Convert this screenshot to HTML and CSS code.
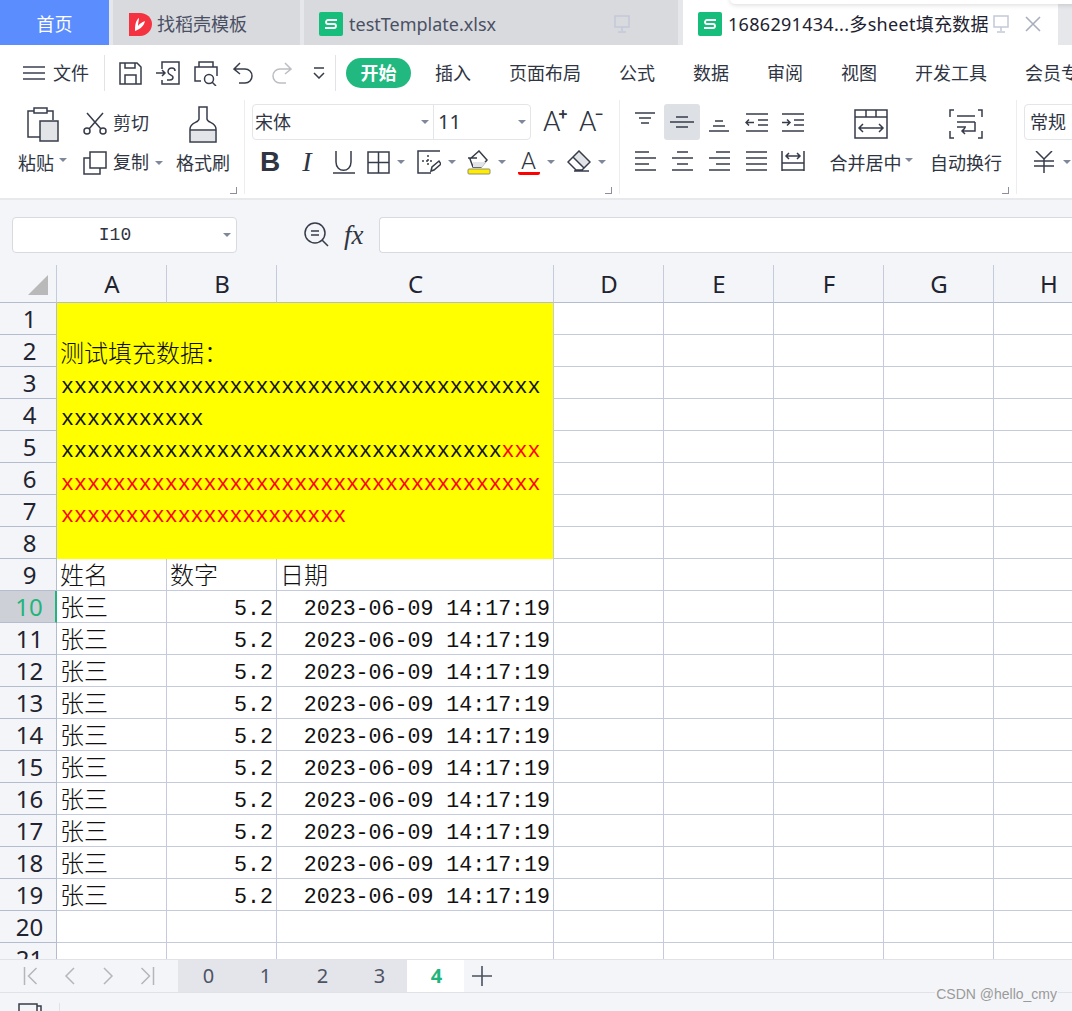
FILE: index.html
```html
<!DOCTYPE html>
<html>
<head>
    <title>WPS 表格</title>
    <link rel="stylesheet" href="styles.css">
</head>
<body>
    <div class="tabbar">
        <div class="tab home">首页</div>
        <div class="tab docer">
            <svg class="logo" width="23" height="24" viewBox="0 0 23 24"><path fill="#f5323f" d="M0 1h11c7 0 12 5 12 11s-5 12-12 12H0z"/><path fill="#fff" d="M6 19c3-1 9-4 10-10-3 1-6 3-7 5 0-3 1-6 1-8-3 2-4 6-4 13z"/></svg>
            <span>找稻壳模板</span>
        </div>
        <div class="tab doc">
            <svg class="logo" width="24" height="24" viewBox="0 0 24 24"><rect width="24" height="24" rx="2" fill="#16bd7b"/><path fill="none" stroke="#fff" stroke-width="1.8" d="M18 8H9a2 2 0 0 0 0 4h6a2 2 0 0 1 0 4H6"/></svg>
            <span class="doc-name">testTemplate.xlsx</span>
            <svg class="monitor" width="16" height="18" viewBox="0 0 16 18"><path fill="none" stroke="#c4c9d8" stroke-width="1.5" d="M1 1h14v11H1zM8 12v4M4 17h8"/></svg>
        </div>
        <div class="tab active">
            <svg class="logo" width="24" height="24" viewBox="0 0 24 24"><rect width="24" height="24" rx="2" fill="#16bd7b"/><path fill="none" stroke="#fff" stroke-width="1.8" d="M18 8H9a2 2 0 0 0 0 4h6a2 2 0 0 1 0 4H6"/></svg>
            <span class="doc-name">1686291434...多sheet填充数据</span>
            <svg class="monitor" width="16" height="18" viewBox="0 0 16 18"><path fill="none" stroke="#c4c9d8" stroke-width="1.5" d="M1 1h14v11H1zM8 12v4M4 17h8"/></svg>
            <svg class="close" width="16" height="16" viewBox="0 0 16 16"><path fill="none" stroke="#a9aebd" stroke-width="1.6" d="M1 1l14 14M15 1L1 15"/></svg>
        </div>
        <div class="tab-shadow"></div>
    </div>

    <div class="menubar">
        <div class="file-btn">
            <svg width="22" height="14" viewBox="0 0 22 14"><path fill="none" stroke="#3a4050" stroke-width="1.6" d="M0 1h22M0 7h22M0 13h22"/></svg>
            <span>文件</span>
        </div>
        <div class="quick">
            <svg width="23" height="23" viewBox="0 0 23 23"><path class="ln" d="M1 1h17l4 4v17H1zM6 22v-9h11v9M6 1v5h10V1"/></svg>
            <svg width="24" height="24" viewBox="0 0 24 24"><path class="ln" d="M6 8V1h17v22H6v-4M0 12h9M6 9l3 3-3 3M11 19h3c2 0 3-1 3-3s-5-2-5-5 2-4 4-4 3 1 3 3"/></svg>
            <svg width="24" height="25" viewBox="0 0 24 25"><path class="ln" d="M5 6V1h14v5M7 20H1V6h22v9"/><circle class="ln" cx="15" cy="18" r="4.5"/><path class="ln" d="M18 21l4 4"/></svg>
            <svg width="20" height="22" viewBox="0 0 20 22"><path class="ln" d="M7 1L1 7l6 5M1 7h11c4 0 7 3 7 7s-3 7-7 7H6"/></svg>
            <svg width="20" height="22" viewBox="0 0 20 22"><path class="ln faint" d="M13 1l6 6-6 5M19 7H8c-4 0-7 3-7 7s3 7 7 7h6"/></svg>
            <svg width="12" height="12" viewBox="0 0 12 12"><path class="ln" d="M1 1h10M1 6l5 5 5-5"/></svg>
        </div>
        <div class="menu-tabs">
            <span class="pill">开始</span>
            <span>插入</span>
            <span>页面布局</span>
            <span>公式</span>
            <span>数据</span>
            <span>审阅</span>
            <span>视图</span>
            <span>开发工具</span>
            <span>会员专享</span>
        </div>
    </div>

    <div class="ribbon">
        <div class="group clip">
            <div class="big paste">
                <div class="big-icon">
                    <svg width="32" height="35" viewBox="0 0 32 35"><path class="ln" d="M7 4H1v26h12M20 4h6v9M7 1h13v5H7z"/><rect class="ln" x="13" y="14" width="18" height="20" fill="#e2e4e7"/></svg>
                </div>
                <div class="big-label">粘贴<i class="caret"></i></div>
            </div>
            <div class="small">
                <div class="small-row">
                    <svg width="24" height="23" viewBox="0 0 24 23"><circle class="ln" cx="4" cy="19" r="3"/><circle class="ln" cx="20" cy="19" r="3"/><path class="ln" d="M6 17L20 1M18 17L4 1"/></svg>
                    <span>剪切</span>
                </div>
                <div class="small-row">
                    <svg width="24" height="24" viewBox="0 0 24 24"><path class="ln" d="M7 1h16v16H7zM7 7H1v16h16v-6"/></svg>
                    <span>复制</span><i class="caret"></i>
                </div>
            </div>
            <div class="big brush">
                <div class="big-icon">
                    <svg width="28" height="37" viewBox="0 0 28 37"><path class="ln" d="M10 1h8v12c0 4 9 3 9 10v13H1V23c0-7 9-6 9-10z"/><path d="M2 25h24v10H2z" fill="#e2e4e7"/><path class="ln" d="M1 24h26"/></svg>
                </div>
                <div class="big-label">格式刷</div>
            </div>
            <i class="corner"></i>
        </div>

        <div class="group font">
            <div class="font-top">
                <div class="select font-select">
                    <div class="select-part name">宋体<i class="caret"></i></div>
                    <div class="select-part size">11<i class="caret"></i></div>
                </div>
                <span class="grow">A<sup>+</sup></span>
                <span class="grow">A<sup>−</sup></span>
            </div>
            <div class="font-tools">
                <div class="slot s36"><b class="bold">B</b></div>
                <div class="slot s38"><span class="ital">I</span></div>
                <div class="slot s35">
                    <svg width="22" height="23" viewBox="0 0 22 23"><path class="ln" d="M3 0v11c0 11 15 11 15 0V0M0 22h22"/></svg>
                </div>
                <div class="slot s50">
                    <svg width="23" height="23" viewBox="0 0 23 23"><path class="ln" d="M1 1h21v21H1zM11.500 1v21M1 11.500h21"/></svg><i class="caret"></i>
                </div>
                <div class="slot s50">
                    <svg width="24" height="24" viewBox="0 0 24 24"><path class="ln" d="M23 1H1v22h13"/><path class="ln" stroke-dasharray="2 2" d="M11 5v12M5 11h12"/><path class="ln" d="M14 21l1-4 7-6 2 3-7 6z"/></svg><i class="caret"></i>
                </div>
                <div class="slot s50">
                    <svg width="24" height="25" viewBox="0 0 24 25"><path class="ln" d="M3 9l9-8 8 9-6 7H6zM1 8h9"/><path d="M6 12h13l-4 5H6z" fill="#e2e4e7"/><rect x="1" y="19" width="22" height="5" rx="1" fill="#ffec00" stroke="#8c8f70"/></svg><i class="caret"></i>
                </div>
                <div class="slot s50 color">
                    <span class="color-a">A</span><i class="caret"></i>
                </div>
                <div class="slot s50">
                    <svg width="24" height="24" viewBox="0 0 24 24"><path d="M12 2l10 10-5 5L7 7z" fill="#e2e4e7"/><path class="ln" d="M1 12L12 1l11 11-8 8H9zM7 21h15M6 7l11 11"/></svg><i class="caret"></i>
                </div>
            </div>
            <i class="corner"></i>
        </div>

        <div class="group align">
            <div class="align-grid">
                <div class="cell"><svg class="high" width="20" height="12" viewBox="0 0 20 12"><path class="ln" d="M0 1h20M4 6h12M6 11h8"/></svg></div>
                <div class="cell on"><svg width="24" height="14" viewBox="0 0 24 14"><path class="ln" d="M6 2h12M0 7h24M6 12h12"/></svg></div>
                <div class="cell"><svg class="low" width="20" height="12" viewBox="0 0 20 12"><path class="ln" d="M6 1h8M4 6h12M0 11h20"/></svg></div>
                <div class="cell"><svg width="23" height="19" viewBox="0 0 23 19"><path class="ln" d="M1 1h22M13 7h10M13 12h10M1 18h22M1 9.500h8M4 6.500L1 9.500l3 3"/></svg></div>
                <div class="cell"><svg width="23" height="19" viewBox="0 0 23 19"><path class="ln" d="M0 1h22M12 7h10M12 12h10M0 18h22M0 9.500h8M5 6.500l3 3-3 3"/></svg></div>
                <div class="cell"><svg width="21" height="20" viewBox="0 0 21 20"><path class="ln" d="M0 1h14M0 7h21M0 13h14M0 19h21"/></svg></div>
                <div class="cell"><svg width="21" height="20" viewBox="0 0 21 20"><path class="ln" d="M5 1h11M0 7h21M5 13h11M0 19h21"/></svg></div>
                <div class="cell"><svg width="21" height="20" viewBox="0 0 21 20"><path class="ln" d="M7 1h14M0 7h21M7 13h14M0 19h21"/></svg></div>
                <div class="cell"><svg width="21" height="20" viewBox="0 0 21 20"><path class="ln" d="M0 1h21M0 7h21M0 13h21M0 19h21"/></svg></div>
                <div class="cell"><svg width="24" height="21" viewBox="0 0 24 21"><path class="ln" d="M1 0v20M23 0v20M1 12h22M1 19h22M5 5h14M8 2L5 5l3 3M16 2l3 3-3 3"/></svg></div>
            </div>
            <div class="big merge">
                <div class="big-icon">
                    <svg width="34" height="30" viewBox="0 0 34 30"><path class="ln" d="M1 1h32v28H1zM1 8h32M12 1v7M22 1v7M5 19h24M9 15l-4 4 4 4M25 15l4 4-4 4"/></svg>
                </div>
                <div class="big-label">合并居中<i class="caret"></i></div>
            </div>
            <div class="big wrap">
                <div class="big-icon">
                    <svg width="34" height="30" viewBox="0 0 34 30"><path class="ln" d="M5 1H1v7M29 1h4v7M1 22v7h4M33 22v7h-4M8 7h18M8 13h18M8 18h9M26 13v9H13M16 19l-3 3 3 3"/></svg>
                </div>
                <div class="big-label">自动换行</div>
            </div>
            <i class="corner"></i>
        </div>

        <div class="group number">
            <div class="select num-select">常规</div>
            <div class="slot money">
                <svg width="20" height="22" viewBox="0 0 20 22"><path class="ln" d="M2 0l8 8 8-8M0 10h20M0 15h20M10 8v14"/></svg><i class="caret"></i>
            </div>
        </div>
    </div>

    <div class="formula">
        <div class="namebox"><span>I10</span><i class="caret"></i></div>
        <svg class="lens" width="25" height="25" viewBox="0 0 25 25"><circle class="ln" cx="11" cy="11" r="10"/><path class="ln" d="M18 18l6 6M7 9h8M7 13h8"/></svg>
        <span class="fx">fx</span>
        <div class="formula-input"></div>
    </div>

    <div class="sheet">
        <table class="grid">
            <colgroup>
                <col class="c-row"><col class="c-std"><col class="c-std"><col class="c-wide"><col class="c-std"><col class="c-std"><col class="c-std"><col class="c-std"><col class="c-std">
            </colgroup>
            <tr class="col-head">
                <th class="all"><svg width="20" height="20" viewBox="0 0 20 20"><path fill="#b9b9b9" d="M20 0v20H0z"/></svg></th>
                <th>A</th><th>B</th><th>C</th><th>D</th><th>E</th><th>F</th><th>G</th><th>H</th>
            </tr>
            <tr>
                <th>1</th>
                <td class="title" colspan="3" rowspan="8">
                    <div class="line cjk">测试填充数据：</div>
                    <div class="line">xxxxxxxxxxxxxxxxxxxxxxxxxxxxxxxxxxxxx</div>
                    <div class="line">xxxxxxxxxxx</div>
                    <div class="line">xxxxxxxxxxxxxxxxxxxxxxxxxxxxxxxxxx<span class="red">xxx</span></div>
                    <div class="line red">xxxxxxxxxxxxxxxxxxxxxxxxxxxxxxxxxxxxx</div>
                    <div class="line red">xxxxxxxxxxxxxxxxxxxxxx</div>
                </td>
                <td></td><td></td><td></td><td></td><td></td>
            </tr>
            <tr><th>2</th><td></td><td></td><td></td><td></td><td></td></tr>
            <tr><th>3</th><td></td><td></td><td></td><td></td><td></td></tr>
            <tr><th>4</th><td></td><td></td><td></td><td></td><td></td></tr>
            <tr><th>5</th><td></td><td></td><td></td><td></td><td></td></tr>
            <tr><th>6</th><td></td><td></td><td></td><td></td><td></td></tr>
            <tr><th>7</th><td></td><td></td><td></td><td></td><td></td></tr>
            <tr><th>8</th><td></td><td></td><td></td><td></td><td></td></tr>
            <tr><th>9</th><td class="cjk">姓名</td><td class="cjk">数字</td><td class="cjk">日期</td><td></td><td></td><td></td><td></td><td></td></tr>
            <tr><th class="current">10</th><td class="cjk">张三</td><td class="num">5.2</td><td class="num">2023-06-09 14:17:19</td><td></td><td></td><td></td><td></td><td></td></tr>
            <tr><th>11</th><td class="cjk">张三</td><td class="num">5.2</td><td class="num">2023-06-09 14:17:19</td><td></td><td></td><td></td><td></td><td></td></tr>
            <tr><th>12</th><td class="cjk">张三</td><td class="num">5.2</td><td class="num">2023-06-09 14:17:19</td><td></td><td></td><td></td><td></td><td></td></tr>
            <tr><th>13</th><td class="cjk">张三</td><td class="num">5.2</td><td class="num">2023-06-09 14:17:19</td><td></td><td></td><td></td><td></td><td></td></tr>
            <tr><th>14</th><td class="cjk">张三</td><td class="num">5.2</td><td class="num">2023-06-09 14:17:19</td><td></td><td></td><td></td><td></td><td></td></tr>
            <tr><th>15</th><td class="cjk">张三</td><td class="num">5.2</td><td class="num">2023-06-09 14:17:19</td><td></td><td></td><td></td><td></td><td></td></tr>
            <tr><th>16</th><td class="cjk">张三</td><td class="num">5.2</td><td class="num">2023-06-09 14:17:19</td><td></td><td></td><td></td><td></td><td></td></tr>
            <tr><th>17</th><td class="cjk">张三</td><td class="num">5.2</td><td class="num">2023-06-09 14:17:19</td><td></td><td></td><td></td><td></td><td></td></tr>
            <tr><th>18</th><td class="cjk">张三</td><td class="num">5.2</td><td class="num">2023-06-09 14:17:19</td><td></td><td></td><td></td><td></td><td></td></tr>
            <tr><th>19</th><td class="cjk">张三</td><td class="num">5.2</td><td class="num">2023-06-09 14:17:19</td><td></td><td></td><td></td><td></td><td></td></tr>
            <tr><th>20</th><td></td><td></td><td></td><td></td><td></td><td></td><td></td><td></td></tr>
            <tr><th>21</th><td></td><td></td><td></td><td></td><td></td><td></td><td></td><td></td></tr>
        </table>
    </div>

    <div class="sheet-tabs">
        <div class="nav">
            <svg width="14" height="18" viewBox="0 0 14 18"><path class="nav-ln" d="M1 0v18M13 1L5 9l8 8"/></svg>
            <svg width="11" height="18" viewBox="0 0 11 18"><path class="nav-ln" d="M10 1L2 9l8 8"/></svg>
            <svg width="11" height="18" viewBox="0 0 11 18"><path class="nav-ln" d="M1 1l8 8-8 8"/></svg>
            <svg width="14" height="18" viewBox="0 0 14 18"><path class="nav-ln" d="M13 0v18M1 1l8 8-8 8"/></svg>
        </div>
        <div class="sheets">
            <span>0</span><span>1</span><span>2</span><span>3</span><span class="cur">4</span>
        </div>
        <svg class="add" width="20" height="20" viewBox="0 0 20 20"><path fill="none" stroke="#4a5060" stroke-width="1.6" d="M10 0v20M0 10h20"/></svg>
    </div>

    <div class="statusbar">
        <svg class="status-icon" width="24" height="18" viewBox="0 0 24 18"><path class="ln" d="M1 8V1h18v14M19 3h4v12"/></svg>
        <i class="status-sep"></i>
    </div>
    <div class="watermark">CSDN @hello_cmy</div>
</body>
</html>
```

FILE: styles.css
```css
body {
    margin: 0;
    width: 1072px;
    height: 1011px;
    overflow: hidden;
    position: relative;
    display: flex;
    flex-direction: column;
    background-color: #f4f5f8;
    color: #2f3542;
    font-family: "Noto Sans", "Noto Sans CJK SC", sans-serif;
    font-size: 18px;
}

svg {
    display: block;
    flex: none;
}

.ln {
    fill: none;
    stroke: #363c4a;
    stroke-width: 1.5;
}

.ln[fill] {
    fill: #e2e4e7;
}

.faint {
    stroke: #bcbec3;
}

.caret {
    display: inline-block;
    flex: none;
    width: 0;
    height: 0;
    border-left: 4px solid transparent;
    border-right: 4px solid transparent;
    border-top: 4px solid #80879a;
}

/* tab strip */
.tabbar {
    flex: none;
    height: 45px;
    position: relative;
    display: flex;
    background-color: #e6e7eb;
    overflow: hidden;
}

.tab {
    flex: none;
    display: flex;
    align-items: center;
    height: 45px;
    box-sizing: border-box;
    padding-top: 3px;
    background-color: #d9dade;
    color: #4a5064;
    line-height: 42px;
}

.home {
    width: 109px;
    justify-content: center;
    background-color: #5c8dff;
    color: #fff;
}

.docer {
    width: 187px;
    margin-left: 4px;
    padding-left: 16px;
    gap: 5px;
}

.doc {
    width: 374px;
    margin-left: 4px;
    padding-left: 15px;
}

.doc-name {
    margin-left: 6px;
    white-space: nowrap;
}

.doc .monitor {
    margin-left: 118px;
}

.active {
    width: 375px;
    margin-left: 5px;
    padding-left: 15px;
    background-color: #fff;
    color: #1e2230;
}

.active .doc-name {
    letter-spacing: 0.3px;
}

.active .monitor {
    margin-left: 4px;
}

.close {
    margin-left: 16px;
}

.tab-shadow {
    position: absolute;
    top: -6px;
    left: 730px;
    width: 400px;
    height: 10px;
    border-radius: 6px;
    background-color: #fff;
    box-shadow: 0 1px 5px rgba(0,0,0,0.15);
}

/* quick access + menu row */
.menubar {
    flex: none;
    height: 50px;
    box-sizing: border-box;
    padding-top: 6px;
    display: flex;
    align-items: center;
    background-color: #fff;
    white-space: nowrap;
    line-height: 24px;
}

.file-btn {
    flex: none;
    width: 105px;
    height: 36px;
    padding-left: 23px;
    box-sizing: border-box;
    display: flex;
    align-items: center;
    gap: 8px;
    border-right: 1px solid #e2e3e6;
}

.quick {
    flex: none;
    width: 231px;
    height: 36px;
    box-sizing: border-box;
    padding-left: 14px;
    display: flex;
    align-items: center;
    gap: 14px;
    border-right: 1px solid #e2e3e6;
}

.quick svg:nth-child(4) {
    margin-left: 1px;
}

.quick svg:nth-child(5) {
    margin-left: 5px;
}

.quick svg:nth-child(6) {
    margin-left: 7px;
}

.menu-tabs {
    flex: none;
    display: flex;
    align-items: center;
    gap: 38px;
    padding-left: 10px;
}

.pill {
    width: 65px;
    height: 30px;
    margin-right: -14px;
    border-radius: 15px;
    background-color: #21b97f;
    color: #fff;
    font-weight: bold;
    text-align: center;
    line-height: 30px;
}

/* ribbon */
.ribbon {
    flex: none;
    height: 103px;
    display: flex;
    background-color: #fff;
    border-bottom: 2px solid #e8e9ec;
    margin-bottom: -2px;
    overflow: hidden;
    white-space: nowrap;
}

.group {
    flex: none;
    position: relative;
    height: 94px;
    margin-top: 5px;
    padding-top: 4px;
    box-sizing: border-box;
    display: flex;
    border-right: 1px solid #ecedf0;
}

.corner {
    position: absolute;
    right: 7px;
    bottom: 0;
    width: 6px;
    height: 6px;
    border-right: 1px solid #8b909c;
    border-bottom: 1px solid #8b909c;
}

.big {
    flex: none;
    display: flex;
    flex-direction: column;
    align-items: center;
}

.big-icon {
    height: 40px;
    display: flex;
    align-items: center;
    justify-content: center;
}

.big-label {
    height: 38px;
    display: flex;
    align-items: center;
    gap: 5px;
    line-height: 38px;
}

.big-label .caret {
    margin-top: -6px;
}

.merge .big-label {
    gap: 3px;
}

.clip {
    width: 245px;
    padding-left: 19px;
}

.paste {
    width: 47px;
}

.small {
    flex: none;
    width: 79px;
    margin-left: 17px;
}

.small-row {
    height: 39px;
    display: flex;
    align-items: center;
    gap: 6px;
    line-height: 39px;
}

.brush {
    width: 52px;
    margin-left: 15px;
}

.font {
    width: 375px;
    padding-left: 7px;
    flex-direction: column;
}

.font-top {
    display: flex;
    align-items: center;
}

.select {
    flex: none;
    height: 36px;
    box-sizing: border-box;
    border: 1px solid #e4e5e9;
    border-radius: 4px;
    background-color: #fff;
}

.font-select {
    width: 279px;
    display: flex;
}

.select-part {
    display: flex;
    align-items: center;
    justify-content: space-between;
    box-sizing: border-box;
    line-height: 34px;
}

.name {
    width: 181px;
    padding: 0 4px 0 2px;
    border-right: 1px solid #e4e5e9;
}

.size {
    flex: 1;
    padding: 0 4px 0 4px;
    font-size: 20px;
}

.grow {
    width: 24px;
    margin-left: 12px;
    font-family: Roboto, sans-serif;
    font-weight: 300;
    font-size: 28px;
    line-height: 36px;
    white-space: nowrap;
}

.grow sup {
    font-size: 16px;
    line-height: 0;
    font-weight: 500;
    margin-left: -2px;
    vertical-align: 11px;
}

.font-tools {
    display: flex;
    height: 38px;
    margin-top: 3px;
}

.slot {
    display: flex;
    align-items: center;
    justify-content: center;
    gap: 7px;
    flex: none;
}

.s36 { width: 36px; }
.s38 { width: 38px; }
.s35 { width: 35px; }
.s50 { width: 50px; }

.bold {
    font-family: "Liberation Sans", sans-serif;
    font-size: 28px;
    line-height: 38px;
}

.ital {
    font-family: "Liberation Serif", serif;
    font-style: italic;
    font-size: 28px;
    line-height: 38px;
}

.color-a {
    width: 22px;
    height: 25px;
    box-sizing: border-box;
    border-bottom: 3px solid #f00;
    border-radius: 0 0 2px 2px;
    font-family: Roboto, sans-serif;
    font-weight: 300;
    font-size: 24px;
    line-height: 23px;
    text-align: center;
}

.align {
    width: 397px;
    padding-left: 7px;
}

.align-grid {
    flex: none;
    display: grid;
    grid-template-columns: repeat(5, 37px);
    grid-auto-rows: 36px;
    row-gap: 3px;
}

.cell {
    display: flex;
    align-items: center;
    justify-content: center;
    width: 36px;
    border-radius: 3px;
}

.cell.on {
    background-color: #dde1e5;
}

.cell .low {
    margin-top: 8px;
}

.cell .high {
    margin-top: -8px;
}

.merge {
    width: 84px;
    margin-left: 17px;
}

.wrap {
    width: 72px;
    margin-left: 17px;
}

.number {
    padding-left: 7px;
    flex-direction: column;
    border-right: none;
}

.num-select {
    width: 80px;
    padding-left: 5px;
    line-height: 34px;
}

.money {
    margin-top: 3px;
    height: 38px;
    width: 46px;
    justify-content: flex-start;
    padding-left: 10px;
    gap: 9px;
}

/* formula bar */
.formula {
    flex: none;
    height: 67px;
    display: flex;
    align-items: center;
    padding-left: 12px;
    padding-top: 6px;
    box-sizing: border-box;
}

.namebox {
    flex: none;
    width: 225px;
    height: 36px;
    box-sizing: border-box;
    padding: 0 5px 0 8px;
    display: flex;
    align-items: center;
    border: 1px solid #d8dae0;
    border-radius: 4px;
    background-color: #fff;
}

.namebox span {
    flex: 1;
    margin-right: 14px;
    text-align: center;
    font-family: "Liberation Mono", monospace;
    font-size: 18px;
    line-height: 36px;
}

.lens {
    margin-left: 67px;
}

.fx {
    flex: none;
    margin-left: 15px;
    width: 35px;
    font-family: "Liberation Serif", serif;
    font-style: italic;
    font-size: 27px;
    line-height: 36px;
}

.formula-input {
    flex: 1;
    height: 36px;
    box-sizing: border-box;
    border: 1px solid #d8dae0;
    border-right: none;
    border-radius: 4px 0 0 4px;
    background-color: #fff;
}

/* grid */
.sheet {
    flex: none;
    height: 694px;
    overflow: hidden;
    background-color: #fff;
}

.grid {
    width: 1104px;
    table-layout: fixed;
    border-collapse: separate;
    border-spacing: 0;
}

.c-row { width: 57px; }
.c-std { width: 110px; }
.c-wide { width: 277px; }

.grid th,
.grid td {
    height: 32px;
    box-sizing: border-box;
    padding: 0;
    border-right: 1px solid #c5cadd;
    border-bottom: 1px solid #c5cadd;
    white-space: nowrap;
    line-height: 31px;
}

.grid th {
    padding-left: 3px;
    background-color: #f4f5f8;
    color: #1f2430;
    font-weight: normal;
    font-size: 24px;
    border-color: #b4bcd0;
}

.grid .col-head th {
    height: 38px;
    padding-left: 1px;
    line-height: 37px;
    border-right-color: #c5cadd;
    border-bottom-color: #b4bcd0;
}

.grid .col-head .all {
    padding: 0;
}

.col-head .all svg {
    margin: 2px 0 0 28px;
}

.grid th.current {
    background-color: #cdd0d6;
    color: #1fb57c;
    border-right: 2px solid #1fb57c;
}

.grid td {
    color: #111;
    font-family: "Liberation Mono", monospace;
    font-size: 21.6px;
}

.grid .cjk {
    font-family: "Noto Sans CJK SC", sans-serif;
    font-size: 24px;
    font-weight: 300;
    padding-left: 3px;
    line-height: 29px;
    vertical-align: top;
}

.grid .num {
    text-align: right;
    padding-right: 3px;
    padding-top: 6px;
    line-height: 25px;
}

.grid td.title {
    background-color: #ff0;
    vertical-align: top;
    padding: 33px 0 0 4px;
    border-bottom: none;
}

.title .line {
    height: 32.4px;
    line-height: 32.4px;
}

.title .line.cjk {
    height: 34.5px;
    margin-left: -1px;
    padding-left: 0;
    font-family: "Noto Sans CJK SC", sans-serif;
    font-size: 24px;
    font-weight: 300;
}

.red {
    color: #f00;
}

/* sheet tabs and status */
.sheet-tabs {
    flex: none;
    height: 34px;
    box-sizing: border-box;
    display: flex;
    align-items: center;
    padding-left: 11px;
    border-top: 1px solid #e0e2e8;
    border-bottom: 1px solid #e0e2e8;
}

.nav {
    display: flex;
    align-items: center;
}

.nav svg {
    width: 39px;
}

.nav-ln {
    fill: none;
    stroke: #b4b6bb;
    stroke-width: 1.5;
}

.sheets {
    display: flex;
    height: 32px;
    margin-left: 11px;
    padding-left: 1px;
    background-color: #e4e5ea;
    color: #4d5365;
    font-size: 20px;
    line-height: 32px;
}

.sheets span {
    width: 57px;
    padding-left: 2px;
    box-sizing: border-box;
    text-align: center;
}

.sheets .cur {
    background-color: #fff;
    color: #1fb57c;
    font-weight: bold;
}

.add {
    margin-left: 8px;
}

.statusbar {
    flex: 1;
    display: flex;
    padding-top: 10px;
    padding-left: 18px;
    overflow: hidden;
}

.status-sep {
    width: 1px;
    height: 20px;
    margin-left: 17px;
    background-color: #e0e2e8;
}

.watermark {
    position: absolute;
    right: 14px;
    top: 985px;
    padding: 0 1px;
    background-color: #f4f5f8;
    color: #9a9a9a;
    font-family: "Liberation Sans", sans-serif;
    font-size: 14px;
    line-height: 18px;
}
```
